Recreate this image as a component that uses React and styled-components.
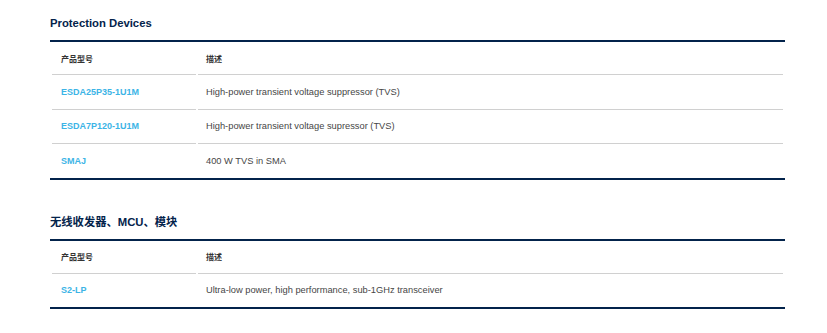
import React from "react";
import styled, { createGlobalStyle } from "styled-components";

const Global = createGlobalStyle`
  html, body { margin: 0; padding: 0; background: #fff; }
  body { font-family: Arial, "Liberation Sans", "Noto Sans CJK SC", sans-serif; }
`;

const Page = styled.div`
  padding: 15px 42px 0 50px;
  display: flex;
  flex-direction: column;
  gap: 34px;
`;

const Section = styled.section`
  display: flex;
  flex-direction: column;
  gap: 9px;
`;

const Title = styled.h2`
  margin: 0;
  font-family: Arial, "Liberation Sans", "Noto Sans CJK SC", sans-serif;
  font-size: 11.3px;
  line-height: 16px;
  font-weight: bold;
  color: #03234b;
`;

const Table = styled.table`
  width: 735px;
  border-collapse: separate;
  border-spacing: 2px 0;
  border-top: 2px solid #03234b;
  border-bottom: 2px solid #03234b;
  margin: 0;
`;

const HeadCell = styled.th`
  text-align: left;
  height: 32px;
  padding: 0 0 0 ${(p) => p.$pad}px;
  font-family: "Liberation Sans", "Noto Sans CJK SC", sans-serif;
  font-size: 8px;
  font-weight: bold;
  color: #333;
  border-bottom: 1px solid #d0d0d0;
  width: ${(p) => p.$w || "auto"};
  vertical-align: middle;
`;

const Cell = styled.td`
  height: 33.5px;
  padding: 0 0 0 ${(p) => p.$pad}px;
  font-size: 9.3px;
  color: #464646;
  border-bottom: ${(p) => (p.$last ? "none" : "1px solid #d0d0d0")};
  vertical-align: middle;
`;

const Link = styled.a`
  color: #3cb4e6;
  font-weight: bold;
  font-size: 9px;
  text-decoration: none;
`;

const data = [
  {
    title: "Protection Devices",
    rows: [
      ["ESDA25P35-1U1M", "High-power transient voltage suppressor (TVS)"],
      ["ESDA7P120-1U1M", "High-power transient voltage supressor (TVS)"],
      ["SMAJ", "400 W TVS in SMA"],
    ],
  },
  {
    title: "无线收发器、MCU、模块",
    rows: [["S2-LP", "Ultra-low power, high performance, sub-1GHz transceiver"]],
  },
];

export default function App() {
  return (
    <>
      <Global />
      <Page>
        {data.map((s) => (
          <Section key={s.title}>
            <Title>{s.title}</Title>
            <Table>
              <thead>
                <tr>
                  <HeadCell $pad={9} $w="135px">产品型号</HeadCell>
                  <HeadCell $pad={8}>描述</HeadCell>
                </tr>
              </thead>
              <tbody>
                {s.rows.map((r, i) => (
                  <tr key={r[0]}>
                    <Cell $pad={9} $last={i === s.rows.length - 1}>
                      <Link href="#">{r[0]}</Link>
                    </Cell>
                    <Cell $pad={8} $last={i === s.rows.length - 1}>
                      {r[1]}
                    </Cell>
                  </tr>
                ))}
              </tbody>
            </Table>
          </Section>
        ))}
      </Page>
    </>
  );
}
